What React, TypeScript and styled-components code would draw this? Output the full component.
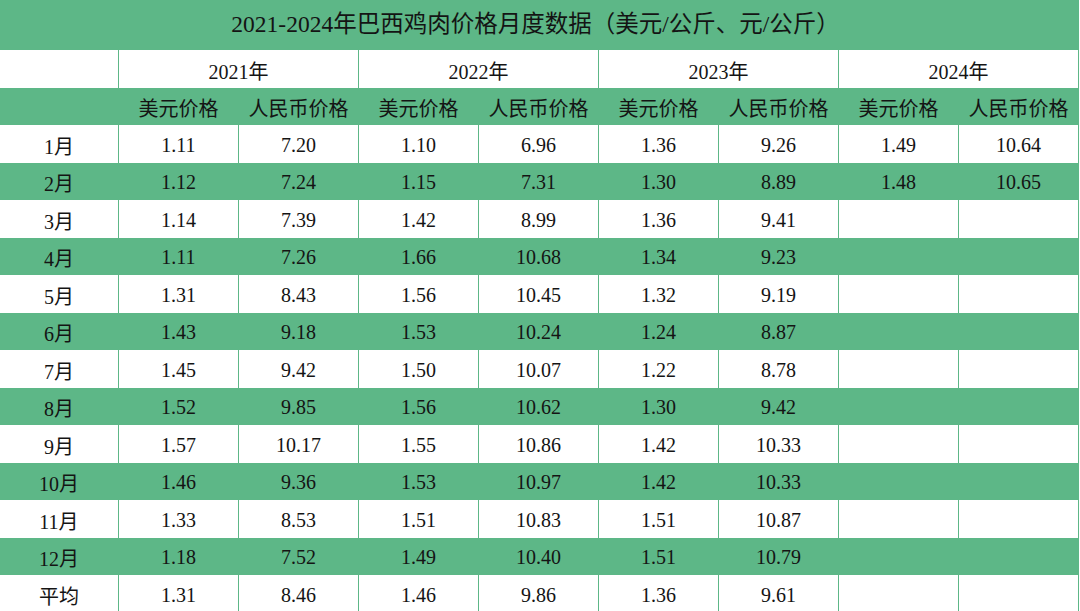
import { createGlobalStyle } from "styled-components";
import styled from "styled-components";

const GREEN = "#5db787";

const GlobalStyle = createGlobalStyle`
  html, body {
    margin: 0;
    padding: 0;
    background: #ffffff;
  }
  body {
    font-family: "Liberation Serif", "Noto Sans CJK SC", serif;
    color: #141414;
  }
`;

const Table = styled.table`
  width: 1079px;
  table-layout: fixed;
  border-collapse: separate;
  border-spacing: 0;
  font-size: 20px;
`;

const Col = styled.col<{ $w: number }>`
  width: ${(p) => p.$w}px;
`;

const TitleCell = styled.th`
  box-sizing: border-box;
  height: 50px;
  background: ${GREEN};
  font-weight: normal;
  font-size: 23.5px;
  line-height: 1;
  text-align: center;
  padding: 0 8px 0 0;
`;

const Row = styled.tr<{ $green?: boolean }>`
  height: 37.5px;
  background: ${(p) => (p.$green ? GREEN : "#ffffff")};
`;

const Cell = styled.td`
  padding: 3px 0 0;
  text-align: center;
  vertical-align: middle;
  white-space: nowrap;
  border-right: 1px solid ${GREEN};
  box-sizing: border-box;
`;

const years = ["2021年", "2022年", "2023年", "2024年"];

const months: { label: string; values: string[] }[] = [
  { label: "1月", values: ["1.11", "7.20", "1.10", "6.96", "1.36", "9.26", "1.49", "10.64"] },
  { label: "2月", values: ["1.12", "7.24", "1.15", "7.31", "1.30", "8.89", "1.48", "10.65"] },
  { label: "3月", values: ["1.14", "7.39", "1.42", "8.99", "1.36", "9.41", "", ""] },
  { label: "4月", values: ["1.11", "7.26", "1.66", "10.68", "1.34", "9.23", "", ""] },
  { label: "5月", values: ["1.31", "8.43", "1.56", "10.45", "1.32", "9.19", "", ""] },
  { label: "6月", values: ["1.43", "9.18", "1.53", "10.24", "1.24", "8.87", "", ""] },
  { label: "7月", values: ["1.45", "9.42", "1.50", "10.07", "1.22", "8.78", "", ""] },
  { label: "8月", values: ["1.52", "9.85", "1.56", "10.62", "1.30", "9.42", "", ""] },
  { label: "9月", values: ["1.57", "10.17", "1.55", "10.86", "1.42", "10.33", "", ""] },
  { label: "10月", values: ["1.46", "9.36", "1.53", "10.97", "1.42", "10.33", "", ""] },
  { label: "11月", values: ["1.33", "8.53", "1.51", "10.83", "1.51", "10.87", "", ""] },
  { label: "12月", values: ["1.18", "7.52", "1.49", "10.40", "1.51", "10.79", "", ""] },
  { label: "平均", values: ["1.31", "8.46", "1.46", "9.86", "1.36", "9.61", "", ""] },
];

export default function App() {
  return (
    <>
      <GlobalStyle />
      <Table>
        <colgroup>
          <Col $w={119} />
          {Array.from({ length: 8 }).map((_, i) => (
            <Col key={i} $w={120} />
          ))}
        </colgroup>
        <thead>
          <tr>
            <TitleCell colSpan={9}>
              2021-2024年巴西鸡肉价格月度数据（美元/公斤、元/公斤）
            </TitleCell>
          </tr>
          <Row>
            <Cell />
            {years.map((y) => (
              <Cell key={y} colSpan={2}>
                {y}
              </Cell>
            ))}
          </Row>
          <Row $green>
            <Cell />
            {years.map((y) => [
              <Cell key={y + "u"}>美元价格</Cell>,
              <Cell key={y + "r"}>人民币价格</Cell>,
            ])}
          </Row>
        </thead>
        <tbody>
          {months.map((m, i) => (
            <Row key={m.label} $green={i % 2 === 1}>
              <Cell>{m.label}</Cell>
              {m.values.map((v, j) => (
                <Cell key={j}>{v}</Cell>
              ))}
            </Row>
          ))}
        </tbody>
      </Table>
    </>
  );
}
